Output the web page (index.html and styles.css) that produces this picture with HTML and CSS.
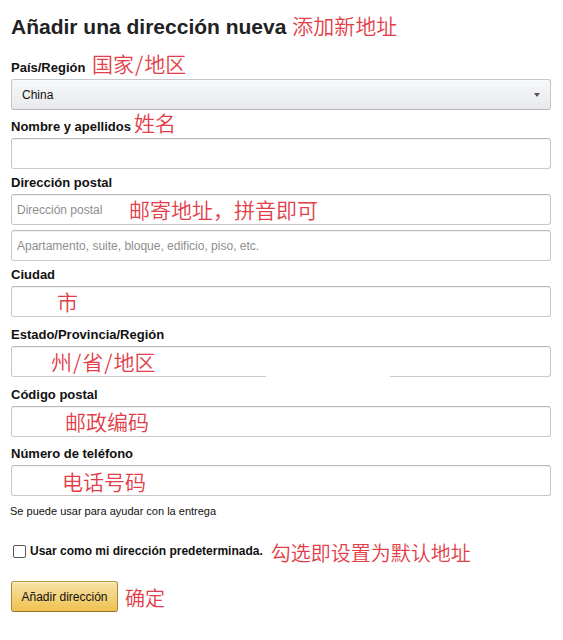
FILE: index.html
```html
<!DOCTYPE html>
<html lang="es">
<head>
<meta charset="utf-8">
<title>Añadir una dirección nueva</title>
<link rel="stylesheet" href="styles.css">
</head>
<body>
<form class="page">
  <h1 class="title">Añadir una dirección nueva <span class="cn cn-title">添加新地址</span></h1>

  <div class="group g-first">
    <label class="label">País/Región <span class="cn cn-label cn-pais">国家<span class="sl">/</span>地区</span></label>
    <div class="dropdown"><span class="dropdown-value">China</span><span class="caret"></span></div>
  </div>

  <div class="group g-mid">
    <label class="label">Nombre y apellidos<span class="cn cn-label cn-name">姓名</span></label>
    <div class="field"><input class="text-input" type="text"></div>
  </div>

  <div class="group g-tight">
    <label class="label">Dirección postal</label>
    <div class="field"><input class="text-input" type="text" placeholder="Dirección postal"><span class="note note-addr">邮寄地址，拼音即可</span></div>
    <div class="field field-second"><input class="text-input" type="text" placeholder="Apartamento, suite, bloque, edificio, piso, etc."></div>
  </div>

  <div class="group g-tight">
    <label class="label">Ciudad</label>
    <div class="field"><input class="text-input" type="text"><span class="note note-city">市</span></div>
  </div>

  <div class="group g-loose">
    <label class="label">Estado/Provincia/Región</label>
    <div class="field"><input class="text-input" type="text"><span class="note note-state">州<span class="sl">/</span>省<span class="sl">/</span>地区</span><span class="patch"></span></div>
  </div>

  <div class="group g-loose">
    <label class="label">Código postal</label>
    <div class="field"><input class="text-input" type="text"><span class="note note-zip">邮政编码</span></div>
  </div>

  <div class="group g-mid">
    <label class="label">Número de teléfono</label>
    <div class="field"><input class="text-input" type="text"><span class="note note-phone">电话号码</span></div>
  </div>

  <p class="hint">Se puede usar para ayudar con la entrega</p>

  <label class="check-row"><input class="check" type="checkbox"><span class="check-text">Usar como mi dirección predeterminada.</span><span class="cn cn-check">勾选即设置为默认地址</span></label>

  <div class="button-row">
    <button class="button" type="button">Añadir dirección</button>
    <span class="cn cn-button">确定</span>
  </div>
</form>
</body>
</html>
```
FILE: styles.css
```css
html, body {
  margin: 0;
  padding: 0;
  background: #ffffff;
}

body {
  font-family: "Liberation Sans", Arial, sans-serif;
  color: #111111;
}

.page {
  display: flex;
  flex-direction: column;
  width: 540px;
  padding: 13px 0 0 11px;
}

.title {
  margin: 0;
  font-size: 21px;
  line-height: 28px;
  font-weight: 700;
  color: #222222;
}

.cn {
  font-family: "Noto Sans CJK SC", sans-serif;
  font-weight: 350;
  color: #e23d48;
  line-height: 0;
}

.cn-title {
  font-size: 21px;
}

.cn-label {
  font-size: 21px;
}

.cn-pais {
  margin-left: 3px;
}

.cn-name {
  margin-left: 3px;
}

.sl {
  margin: 0 1px;
}

.group {
  display: flex;
  flex-direction: column;
}

.g-first { margin-top: 17px; }
.g-mid { margin-top: 7px; }
.g-tight { margin-top: 4px; }
.g-loose { margin-top: 8px; }

.label {
  display: block;
  font-size: 13px;
  line-height: 19px;
  font-weight: 700;
  color: #111111;
  margin-bottom: 2px;
}

.dropdown {
  display: flex;
  align-items: center;
  justify-content: space-between;
  box-sizing: border-box;
  height: 31px;
  padding: 0 10px 0 10px;
  border: 1px solid #c3c6ca;
  border-bottom-color: #b0b3b8;
  border-radius: 3px;
  background: linear-gradient(to bottom, #f7f8fa, #e7e9ec);
  box-shadow: 0 1px 0 rgba(255, 255, 255, 0.6) inset;
  font-size: 12px;
  color: #111111;
}

.caret {
  width: 0;
  height: 0;
  border-left: 3.5px solid transparent;
  border-right: 3.5px solid transparent;
  border-top: 4px solid #555555;
}

.field {
  position: relative;
  height: 31px;
}

.field-second {
  margin-top: 5px;
}

.text-input {
  display: block;
  box-sizing: border-box;
  width: 100%;
  height: 31px;
  margin: 0;
  padding: 0 5px;
  border: 1px solid #c8c8c8;
  border-top-color: #b9b9b9;
  border-radius: 3px;
  background: #ffffff;
  box-shadow: 0 1px 0 rgba(0, 0, 0, 0.05) inset;
  font-family: "Liberation Sans", Arial, sans-serif;
  font-size: 12px;
  color: #111111;
  outline: none;
}

.text-input::placeholder {
  color: #8e8e8e;
}

.note {
  position: absolute;
  top: 0;
  height: 31px;
  line-height: 31px;
  font-family: "Noto Sans CJK SC", sans-serif;
  font-weight: 350;
  font-size: 21px;
  color: #e23d48;
  white-space: nowrap;
}

.note-addr { left: 118px; }
.note-city { left: 46px; }
.note-state { left: 40px; }
.note-zip { left: 54px; }
.note-phone { left: 51px; top: 1px; }

.patch {
  position: absolute;
  left: 255px;
  bottom: -2px;
  width: 124px;
  height: 3px;
  background: #ffffff;
}

.hint {
  margin: 8px 0 0 -1px;
  font-size: 11px;
  line-height: 15px;
  color: #111111;
}

.check-row {
  display: flex;
  align-items: center;
  margin-top: 22px;
  height: 20px;
  font-size: 12px;
  line-height: 20px;
  font-weight: 700;
  color: #111111;
}

.check {
  appearance: none;
  -webkit-appearance: none;
  box-sizing: border-box;
  width: 13px;
  height: 13px;
  margin: 1px 4px 0 2px;
  border: 1px solid #555555;
  border-radius: 2px;
  background: #ffffff;
}

.check-text {
  white-space: nowrap;
}

.cn-check {
  font-size: 20px;
  margin-left: 8px;
  position: relative;
  top: 2px;
}

.button-row {
  display: flex;
  align-items: flex-start;
  margin-top: 20px;
}

.button {
  box-sizing: border-box;
  height: 31px;
  width: 107px;
  padding: 0;
  border: 1px solid #b08c38;
  border-color: #b8953f #a88734 #94772f;
  border-radius: 3px;
  background: linear-gradient(to bottom, #f8e2aa, #efc24f);
  box-shadow: 0 1px 0 rgba(255, 255, 255, 0.4) inset;
  font-family: "Liberation Sans", Arial, sans-serif;
  font-size: 12px;
  color: #111111;
}

.cn-button {
  font-size: 20px;
  line-height: 28px;
  margin: 3px 0 0 7px;
}
```
